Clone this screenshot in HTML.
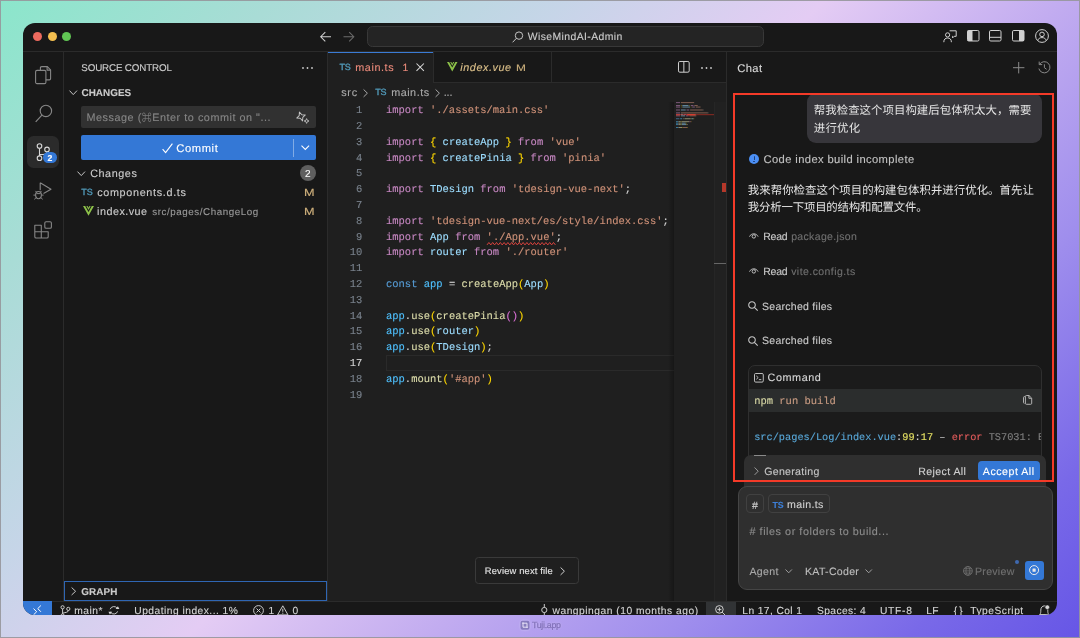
<!DOCTYPE html>
<html lang="zh"><head><meta charset="utf-8"><title>WiseMindAI-Admin</title><style>
html,body{margin:0;padding:0}
body{width:1080px;height:638px;overflow:hidden;position:relative;text-rendering:geometricPrecision;font-family:"Liberation Sans","Noto Sans CJK SC",sans-serif;
background:linear-gradient(135deg,#8be6cb 0%,#a9dcd6 16%,#c6d5e8 33%,#e4ccf4 48%,#c2acf0 62%,#9f8eed 76%,#7969e8 90%,#6656e6 100%);}
.frame{position:absolute;left:0;top:0;width:1078px;height:636px;border:1px solid rgba(150,150,155,.9);pointer-events:none}
.win{position:absolute;left:23px;top:23px;width:1034px;height:592.3px;border-radius:12px;background:#181818;overflow:hidden;will-change:transform}
.a{position:absolute;box-sizing:border-box}
.t{position:absolute;white-space:pre;line-height:20px;height:20px;-webkit-text-stroke:.12px currentColor}
svg{overflow:visible}
.wm{position:absolute;left:519.8px;top:619.7px;font-size:8.9px;line-height:11px;will-change:transform;color:rgba(124,108,182,.9);white-space:nowrap;letter-spacing:-.3px;-webkit-text-stroke:.3px rgba(124,108,182,.9);text-shadow:0 0 1.6px rgba(240,232,255,.75)}
</style></head><body><div class="win">
<div class="a" style="left:0.00px;top:28.00px;width:1034.00px;height:1.00px;background:#2b2b2b"></div>
<div class="a" style="left:40.00px;top:29.00px;width:1.00px;height:549.00px;background:#2b2b2b"></div>
<div class="a" style="left:304.00px;top:29.00px;width:1.00px;height:549.00px;background:#2b2b2b"></div>
<div class="a" style="left:305.00px;top:29.00px;width:399.00px;height:549.00px;background:#1f1f1f"></div>
<div class="a" style="left:703.00px;top:29.00px;width:1.00px;height:549.00px;background:#2b2b2b"></div>
<div class="a" style="left:0.00px;top:577.80px;width:1034.00px;height:1.00px;background:#2b2b2b"></div>
<div class="a" style="left:9.80px;top:9.00px;width:9.20px;height:9.20px;border-radius:50%;background:#ec6a5e"></div>
<div class="a" style="left:24.65px;top:9.00px;width:9.20px;height:9.20px;border-radius:50%;background:#f4bf4f"></div>
<div class="a" style="left:38.90px;top:9.00px;width:9.20px;height:9.20px;border-radius:50%;background:#61c554"></div>
<svg class="a" style="left:297.00px;top:8.00px;" width="11.50" height="11.50" viewBox="0 0 11.5 11.5"><path d="M11 5.75H0.8M5.3 1.1L0.7 5.75L5.3 10.4" fill="none" stroke="#cfcfcf" stroke-width="1.05"/></svg>
<svg class="a" style="left:320.00px;top:8.00px;" width="11.50" height="11.50" viewBox="0 0 11.5 11.5"><path d="M0.5 5.75H10.7M6.2 1.1L10.8 5.75L6.2 10.4" fill="none" stroke="#6b6b6b" stroke-width="1.05"/></svg>
<div class="a" style="left:344.00px;top:3.00px;width:397.00px;height:20.50px;background:#242424;border:1px solid #383838;border-radius:5.5px"></div>
<svg class="a" style="left:489.00px;top:7.50px;" width="11.50" height="12.00" viewBox="0 0 11.5 12"><circle cx="7" cy="4.6" r="3.7" fill="none" stroke="#c4c4c4" stroke-width="1"/><path d="M4.4 7.3L0.6 11.3" stroke="#c4c4c4" stroke-width="1" fill="none"/></svg>
<span class="t" style="left:504.80px;top:5px;font-size:10.40px;color:#cccccc;letter-spacing:0.404px;">WiseMindAI-Admin</span>
<svg class="a" style="left:919.50px;top:6.60px;" width="14.00" height="13.00" viewBox="0 0 14 13"><circle cx="4.6" cy="4.9" r="2.1" fill="none" stroke="#d0d0d0" stroke-width="1"/><path d="M0.8 12.2C0.8 9.3 2.4 8 4.6 8S8.4 9.3 8.4 12.2" fill="none" stroke="#d0d0d0" stroke-width="1"/><path d="M6.6 0.8H13.2V6.3H11.2L9.6 7.9V6.3H9.2" fill="none" stroke="#d0d0d0" stroke-width="1" stroke-linejoin="round"/></svg>
<svg class="a" style="left:943.50px;top:7.00px;" width="12.50" height="11.50" viewBox="0 0 12.5 11.5"><rect x="0.5" y="0.5" width="11.5" height="10.5" rx="1.3" fill="none" stroke="#d0d0d0" stroke-width="1"/><rect x="0.5" y="0.5" width="5" height="10.5" fill="#d0d0d0"/></svg>
<svg class="a" style="left:966.00px;top:7.00px;" width="12.50" height="11.50" viewBox="0 0 12.5 11.5"><rect x="0.5" y="0.5" width="11.5" height="10.5" rx="1.3" fill="none" stroke="#d0d0d0" stroke-width="1"/><path d="M0.5 7.3H12" stroke="#d0d0d0" stroke-width="1"/></svg>
<svg class="a" style="left:988.50px;top:7.00px;" width="12.50" height="11.50" viewBox="0 0 12.5 11.5"><rect x="0.5" y="0.5" width="11.5" height="10.5" rx="1.3" fill="none" stroke="#d0d0d0" stroke-width="1"/><rect x="7" y="0.5" width="5" height="10.5" fill="#d0d0d0"/></svg>
<svg class="a" style="left:1012.00px;top:5.90px;" width="14.00" height="14.00" viewBox="0 0 14 14"><circle cx="7" cy="7" r="6.4" fill="none" stroke="#d0d0d0" stroke-width="1"/><circle cx="7" cy="5.4" r="2.3" fill="none" stroke="#d0d0d0" stroke-width="1"/><path d="M2.8 11.6C3.3 9.4 4.9 8.6 7 8.6S10.7 9.4 11.2 11.6" fill="none" stroke="#d0d0d0" stroke-width="1"/></svg>
<svg class="a" style="left:11.50px;top:42.50px;" width="16.50" height="18.50" viewBox="0 0 16.5 18.5"><path d="M5.4 4.4V1.9Q5.4 0.6 6.7 0.6H12.3L15.6 3.9V12.6Q15.6 13.9 14.3 13.9H10.9" fill="none" stroke="#868686" stroke-width="1.1"/><path d="M12.1 0.8V4.1H15.4" fill="none" stroke="#868686" stroke-width="1.1"/><rect x="0.6" y="4.4" width="10.3" height="13.2" rx="1.4" fill="none" stroke="#868686" stroke-width="1.1"/></svg>
<svg class="a" style="left:11.50px;top:81.00px;" width="18.00" height="18.50" viewBox="0 0 18 18.5"><circle cx="10.9" cy="6.9" r="5.7" fill="none" stroke="#868686" stroke-width="1.15"/><path d="M6.9 11.2L0.7 17.9" stroke="#868686" stroke-width="1.15" fill="none"/></svg>
<div class="a" style="left:4.20px;top:113.00px;width:31.60px;height:31.70px;background:#2b2b2b;border-radius:6.5px"></div>
<svg class="a" style="left:12.00px;top:119.00px;" width="18.00" height="20.00" viewBox="0 0 18 20"><circle cx="4.5" cy="4" r="2.3" fill="none" stroke="#d7d7d7" stroke-width="1.1"/><circle cx="4.5" cy="16.2" r="2.3" fill="none" stroke="#d7d7d7" stroke-width="1.1"/><circle cx="12" cy="7.4" r="2.3" fill="none" stroke="#d7d7d7" stroke-width="1.1"/><path d="M4.5 6.3V13.9M12 9.7C12 12.4 9.5 12.6 4.6 12.6" fill="none" stroke="#d7d7d7" stroke-width="1.1"/></svg>
<div class="a" style="left:20.40px;top:129.40px;width:13.90px;height:10.40px;background:#3478d6;border-radius:5.2px"></div>
<span class="t" style="left:24.60px;top:125px;font-size:8.70px;color:#ffffff;font-weight:bold;">2</span>
<svg class="a" style="left:10.00px;top:159.00px;" width="19.00" height="18.00" viewBox="0 0 19 18"><path d="M7.2 0.8L18 7.3L10.5 11.6M7.2 0.8V8.2" fill="none" stroke="#868686" stroke-width="1.1" stroke-linejoin="round"/><ellipse cx="5.5" cy="13.1" rx="2.9" ry="3.6" fill="none" stroke="#868686" stroke-width="1.1"/><path d="M3.6 10.2L2.4 8.9M7.4 10.2L8.6 8.9M2.6 13.1H0.4M8.4 13.1H10.6M3.2 15.6L1.3 17.3M7.8 15.6L9.7 17.3M3.4 11.6H7.6" fill="none" stroke="#868686" stroke-width="1"/></svg>
<svg class="a" style="left:11.00px;top:197.50px;" width="18.00" height="17.50" viewBox="0 0 18 17.5"><path d="M0.8 4.2H7.3V10.7H14.2V15.7Q14.2 17 12.9 17H2.1Q0.8 17 0.8 15.7ZM7.3 10.7V17M0.8 10.7H7.3" fill="none" stroke="#868686" stroke-width="1.1" stroke-linejoin="round"/><rect x="10.8" y="0.7" width="6.6" height="6.6" rx="1.3" fill="none" stroke="#868686" stroke-width="1.1"/></svg>
<span class="t" style="left:58.30px;top:36px;font-size:9.80px;color:#cccccc;letter-spacing:-0.153px;">SOURCE CONTROL</span>
<svg class="a" style="left:278.50px;top:43.50px;" width="11.00" height="2.00" viewBox="0 0 11 2"><circle cx="1" cy="1" r="0.9" fill="#ccc"/><circle cx="5.5" cy="1" r="0.9" fill="#ccc"/><circle cx="10" cy="1" r="0.9" fill="#ccc"/></svg>
<svg class="a" style="left:45.50px;top:66.50px;" width="8.50" height="5.50" viewBox="0 0 8.5 5.5"><path d="M0.5 0.6L4.25 4.6L8 0.6" fill="none" stroke="#c5c5c5" stroke-width="1"/></svg>
<span class="t" style="left:58.50px;top:61px;font-size:9.90px;color:#cccccc;font-weight:bold;letter-spacing:0.044px;">CHANGES</span>
<div class="a" style="left:58.00px;top:83.00px;width:235.00px;height:22.00px;background:#313131;border-radius:2px"></div>
<span class="t" style="left:63.50px;top:85px;font-size:10.80px;color:#858585;letter-spacing:0.540px;">Message (<span style="font-size:.92em;vertical-align:.02em">⌘</span>Enter to commit on "...</span>
<svg class="a" style="left:273.00px;top:87.50px;" width="13.50" height="13.00" viewBox="0 0 13.5 13"><path d="M5 0.8L6.4 4.1L9.6 5.5L6.4 6.9L5 10.2L3.6 6.9L0.4 5.5L3.6 4.1Z" fill="none" stroke="#c5c5c5" stroke-width="0.95" stroke-linejoin="round" transform="rotate(-20 5 5.5)"/><path d="M10.6 7.6L11.3 9.3L13 10L11.3 10.7L10.6 12.4L9.9 10.7L8.2 10L9.9 9.3Z" fill="none" stroke="#c5c5c5" stroke-width="0.85" stroke-linejoin="round"/></svg>
<div class="a" style="left:58.00px;top:112.30px;width:235.00px;height:24.70px;background:#3478d6;border-radius:2px"></div>
<svg class="a" style="left:138.50px;top:119.50px;" width="11.00" height="10.50" viewBox="0 0 11 10.5"><path d="M0.6 6.2L3.6 9.6L10.4 0.7" fill="none" stroke="#fff" stroke-width="1.1"/></svg>
<span class="t" style="left:153.20px;top:116px;font-size:11.20px;color:#ffffff;letter-spacing:0.609px;">Commit</span>
<div class="a" style="left:269.90px;top:116.00px;width:1.00px;height:17.50px;background:rgba(255,255,255,.38)"></div>
<svg class="a" style="left:277.50px;top:122.30px;" width="8.60" height="5.20" viewBox="0 0 8.6 5.2"><path d="M0.5 0.6L4.3 4.4L8.1 0.6" fill="none" stroke="#fff" stroke-width="1.05"/></svg>
<svg class="a" style="left:54.30px;top:147.50px;" width="8.50" height="5.50" viewBox="0 0 8.5 5.5"><path d="M0.5 0.6L4.25 4.6L8 0.6" fill="none" stroke="#c5c5c5" stroke-width="1"/></svg>
<span class="t" style="left:67.20px;top:141px;font-size:10.80px;color:#cccccc;letter-spacing:0.567px;">Changes</span>
<div class="a" style="left:276.80px;top:142.20px;width:16.20px;height:16.00px;background:#5f5f5f;border-radius:8px"></div>
<span class="t" style="left:282.10px;top:142px;font-size:10.00px;color:#ffffff;">2</span>
<span class="t" style="left:58.30px;top:159px;font-size:9.00px;color:#519aba;letter-spacing:-0.158px;-webkit-text-stroke:.35px #519aba;">TS</span>
<span class="t" style="left:74.20px;top:160px;font-size:10.80px;color:#cccccc;letter-spacing:0.678px;">components.d.ts</span>
<span class="t" style="left:281.10px;top:161px;font-size:10.30px;color:#cfb07c;transform:scaleX(1.23);transform-origin:0 50%;">M</span>
<svg class="a" style="left:59.70px;top:183.00px;" width="11.00" height="10.00" viewBox="0 0 10.5 9.5"><path d="M0 0H2.1L5.25 5.6L8.4 0H10.5L5.25 9.4Z" fill="#8dc149"/><path d="M3.2 0H4.3L5.25 1.7L6.2 0H7.3L5.25 3.7Z" fill="#8dc149"/></svg>
<span class="t" style="left:74.10px;top:179px;font-size:10.80px;color:#cccccc;letter-spacing:0.474px;">index.vue</span>
<span class="t" style="left:129.30px;top:180px;font-size:9.80px;color:#9a9a9a;letter-spacing:0.555px;">src/pages/ChangeLog</span>
<span class="t" style="left:281.10px;top:180px;font-size:10.30px;color:#cfb07c;transform:scaleX(1.23);transform-origin:0 50%;">M</span>
<div class="a" style="left:41.00px;top:557.60px;width:263.00px;height:20.40px;border:1px solid #2f66b3"></div>
<svg class="a" style="left:47.90px;top:563.90px;" width="5.50" height="8.50" viewBox="0 0 5.5 8.5"><path d="M0.6 0.5L4.6 4.25L0.6 8" fill="none" stroke="#c5c5c5" stroke-width="1"/></svg>
<span class="t" style="left:58.30px;top:560px;font-size:9.90px;color:#cccccc;font-weight:bold;letter-spacing:0.126px;">GRAPH</span>
<div class="a" style="left:305.00px;top:29.00px;width:399.00px;height:30.00px;background:#181818"></div>
<div class="a" style="left:305.00px;top:59.00px;width:399.00px;height:1.00px;background:#2b2b2b"></div>
<div class="a" style="left:305.00px;top:29.00px;width:104.50px;height:31.00px;background:#1f1f1f"></div>
<div class="a" style="left:305.00px;top:28.50px;width:104.50px;height:1.10px;background:#3a7bd5"></div>
<div class="a" style="left:409.50px;top:29.00px;width:1.00px;height:30.00px;background:#2b2b2b"></div>
<div class="a" style="left:527.50px;top:29.00px;width:1.00px;height:30.00px;background:#2b2b2b"></div>
<span class="t" style="left:316.50px;top:34px;font-size:9.00px;color:#519aba;letter-spacing:-0.208px;-webkit-text-stroke:.35px #519aba;">TS</span>
<span class="t" style="left:332.30px;top:35px;font-size:10.80px;color:#e8897a;letter-spacing:0.584px;">main.ts</span>
<span class="t" style="left:379.60px;top:36px;font-size:10.40px;color:#e8897a;">1</span>
<svg class="a" style="left:392.80px;top:40.30px;" width="8.40" height="8.40" viewBox="0 0 8.4 8.4"><path d="M0.5 0.5L7.9 7.9M7.9 0.5L0.5 7.9" stroke="#d8d8d8" stroke-width="1.05" fill="none"/></svg>
<svg class="a" style="left:423.50px;top:39.30px;" width="10.50" height="9.50" viewBox="0 0 10.5 9.5"><path d="M0 0H2.1L5.25 5.6L8.4 0H10.5L5.25 9.4Z" fill="#8dc149"/><path d="M3.2 0H4.3L5.25 1.7L6.2 0H7.3L5.25 3.7Z" fill="#8dc149"/></svg>
<span class="t" style="left:437.30px;top:35px;font-size:10.80px;color:#dcc08a;font-style:italic;letter-spacing:0.563px;">index.vue</span>
<span class="t" style="left:493.40px;top:36px;font-size:9.50px;color:#c9ae7b;transform:scaleX(1.25);transform-origin:0 50%;">M</span>
<svg class="a" style="left:655.00px;top:38.30px;" width="11.70" height="11.70" viewBox="0 0 11.7 11.7"><rect x="0.5" y="0.5" width="10.7" height="10.7" rx="1.3" fill="none" stroke="#d0d0d0" stroke-width="1"/><path d="M5.85 0.5V11.2" stroke="#d0d0d0" stroke-width="1"/></svg>
<svg class="a" style="left:677.50px;top:43.50px;" width="11.00" height="2.00" viewBox="0 0 11 2"><circle cx="1" cy="1" r="0.9" fill="#ccc"/><circle cx="5.5" cy="1" r="0.9" fill="#ccc"/><circle cx="10" cy="1" r="0.9" fill="#ccc"/></svg>
<span class="t" style="left:318.20px;top:60px;font-size:10.80px;color:#a9a9a9;letter-spacing:0.765px;">src</span>
<svg class="a" style="left:340.30px;top:65.50px;" width="5.00" height="8.40" viewBox="0 0 5 8.4"><path d="M0.6 0.5L4.4 4.2L0.6 7.9" fill="none" stroke="#a9a9a9" stroke-width="1"/></svg>
<span class="t" style="left:352.30px;top:59px;font-size:9.00px;color:#519aba;letter-spacing:-0.208px;-webkit-text-stroke:.35px #519aba;">TS</span>
<span class="t" style="left:368.20px;top:60px;font-size:10.80px;color:#a9a9a9;letter-spacing:0.512px;">main.ts</span>
<svg class="a" style="left:411.50px;top:65.50px;" width="5.00" height="8.40" viewBox="0 0 5 8.4"><path d="M0.6 0.5L4.4 4.2L0.6 7.9" fill="none" stroke="#a9a9a9" stroke-width="1"/></svg>
<span class="t" style="left:420.70px;top:60px;font-size:10.80px;color:#a9a9a9;letter-spacing:-0.100px;">...</span>
<div class="a" style="left:363.00px;top:331.60px;width:288.00px;height:16.00px;border:1px solid #2a2a2a;border-right:none"></div>
<span class="t" style="left:332.92px;top:78px;font-size:10.47px;color:#78808b;font-family:'Liberation Mono','DejaVu Sans Mono',monospace;">1</span>
<span class="t" style="left:363.00px;top:78px;font-size:10.47px;color:#d4d4d4;font-family:'Liberation Mono','DejaVu Sans Mono',monospace;"><span style="color:#c586c0">import</span> <span style="color:#ce9178">'./assets/main.css'</span></span>
<span class="t" style="left:332.92px;top:94px;font-size:10.47px;color:#78808b;font-family:'Liberation Mono','DejaVu Sans Mono',monospace;">2</span>
<span class="t" style="left:332.92px;top:110px;font-size:10.47px;color:#78808b;font-family:'Liberation Mono','DejaVu Sans Mono',monospace;">3</span>
<span class="t" style="left:363.00px;top:110px;font-size:10.47px;color:#d4d4d4;font-family:'Liberation Mono','DejaVu Sans Mono',monospace;"><span style="color:#c586c0">import</span> <span style="color:#ffd700">{</span> <span style="color:#9cdcfe">createApp</span> <span style="color:#ffd700">}</span> <span style="color:#c586c0">from</span> <span style="color:#ce9178">'vue'</span></span>
<span class="t" style="left:332.92px;top:126px;font-size:10.47px;color:#78808b;font-family:'Liberation Mono','DejaVu Sans Mono',monospace;">4</span>
<span class="t" style="left:363.00px;top:126px;font-size:10.47px;color:#d4d4d4;font-family:'Liberation Mono','DejaVu Sans Mono',monospace;"><span style="color:#c586c0">import</span> <span style="color:#ffd700">{</span> <span style="color:#9cdcfe">createPinia</span> <span style="color:#ffd700">}</span> <span style="color:#c586c0">from</span> <span style="color:#ce9178">'pinia'</span></span>
<span class="t" style="left:332.92px;top:141px;font-size:10.47px;color:#78808b;font-family:'Liberation Mono','DejaVu Sans Mono',monospace;">5</span>
<span class="t" style="left:332.92px;top:157px;font-size:10.47px;color:#78808b;font-family:'Liberation Mono','DejaVu Sans Mono',monospace;">6</span>
<span class="t" style="left:363.00px;top:157px;font-size:10.47px;color:#d4d4d4;font-family:'Liberation Mono','DejaVu Sans Mono',monospace;"><span style="color:#c586c0">import</span> <span style="color:#9cdcfe">TDesign</span> <span style="color:#c586c0">from</span> <span style="color:#ce9178">'tdesign-vue-next'</span><span style="color:#d4d4d4">;</span></span>
<span class="t" style="left:332.92px;top:173px;font-size:10.47px;color:#78808b;font-family:'Liberation Mono','DejaVu Sans Mono',monospace;">7</span>
<span class="t" style="left:332.92px;top:189px;font-size:10.47px;color:#78808b;font-family:'Liberation Mono','DejaVu Sans Mono',monospace;">8</span>
<span class="t" style="left:363.00px;top:189px;font-size:10.47px;color:#d4d4d4;font-family:'Liberation Mono','DejaVu Sans Mono',monospace;"><span style="color:#c586c0">import</span> <span style="color:#ce9178">'tdesign-vue-next/es/style/index.css'</span><span style="color:#d4d4d4">;</span></span>
<span class="t" style="left:332.92px;top:205px;font-size:10.47px;color:#78808b;font-family:'Liberation Mono','DejaVu Sans Mono',monospace;">9</span>
<span class="t" style="left:363.00px;top:205px;font-size:10.47px;color:#d4d4d4;font-family:'Liberation Mono','DejaVu Sans Mono',monospace;"><span style="color:#c586c0">import</span> <span style="color:#9cdcfe">App</span> <span style="color:#c586c0">from</span> <span style="color:#ce9178">'./App.vue'</span><span style="color:#d4d4d4">;</span></span>
<span class="t" style="left:326.64px;top:220px;font-size:10.47px;color:#78808b;font-family:'Liberation Mono','DejaVu Sans Mono',monospace;">10</span>
<span class="t" style="left:363.00px;top:220px;font-size:10.47px;color:#d4d4d4;font-family:'Liberation Mono','DejaVu Sans Mono',monospace;"><span style="color:#c586c0">import</span> <span style="color:#9cdcfe">router</span> <span style="color:#c586c0">from</span> <span style="color:#ce9178">'./router'</span></span>
<span class="t" style="left:326.64px;top:236px;font-size:10.47px;color:#78808b;font-family:'Liberation Mono','DejaVu Sans Mono',monospace;">11</span>
<span class="t" style="left:326.64px;top:252px;font-size:10.47px;color:#78808b;font-family:'Liberation Mono','DejaVu Sans Mono',monospace;">12</span>
<span class="t" style="left:363.00px;top:252px;font-size:10.47px;color:#d4d4d4;font-family:'Liberation Mono','DejaVu Sans Mono',monospace;"><span style="color:#569cd6">const</span> <span style="color:#4fc1ff">app</span> <span style="color:#d4d4d4">=</span> <span style="color:#dcdcaa">createApp</span><span style="color:#ffd700">(</span><span style="color:#9cdcfe">App</span><span style="color:#ffd700">)</span></span>
<span class="t" style="left:326.64px;top:268px;font-size:10.47px;color:#78808b;font-family:'Liberation Mono','DejaVu Sans Mono',monospace;">13</span>
<span class="t" style="left:326.64px;top:284px;font-size:10.47px;color:#78808b;font-family:'Liberation Mono','DejaVu Sans Mono',monospace;">14</span>
<span class="t" style="left:363.00px;top:284px;font-size:10.47px;color:#d4d4d4;font-family:'Liberation Mono','DejaVu Sans Mono',monospace;"><span style="color:#4fc1ff">app</span><span style="color:#d4d4d4">.</span><span style="color:#dcdcaa">use</span><span style="color:#ffd700">(</span><span style="color:#dcdcaa">createPinia</span><span style="color:#da70d6">()</span><span style="color:#ffd700">)</span></span>
<span class="t" style="left:326.64px;top:299px;font-size:10.47px;color:#78808b;font-family:'Liberation Mono','DejaVu Sans Mono',monospace;">15</span>
<span class="t" style="left:363.00px;top:299px;font-size:10.47px;color:#d4d4d4;font-family:'Liberation Mono','DejaVu Sans Mono',monospace;"><span style="color:#4fc1ff">app</span><span style="color:#d4d4d4">.</span><span style="color:#dcdcaa">use</span><span style="color:#ffd700">(</span><span style="color:#9cdcfe">router</span><span style="color:#ffd700">)</span></span>
<span class="t" style="left:326.64px;top:315px;font-size:10.47px;color:#78808b;font-family:'Liberation Mono','DejaVu Sans Mono',monospace;">16</span>
<span class="t" style="left:363.00px;top:315px;font-size:10.47px;color:#d4d4d4;font-family:'Liberation Mono','DejaVu Sans Mono',monospace;"><span style="color:#4fc1ff">app</span><span style="color:#d4d4d4">.</span><span style="color:#dcdcaa">use</span><span style="color:#ffd700">(</span><span style="color:#9cdcfe">TDesign</span><span style="color:#ffd700">)</span><span style="color:#d4d4d4">;</span></span>
<span class="t" style="left:326.64px;top:331px;font-size:10.47px;color:#d0d0d0;font-family:'Liberation Mono','DejaVu Sans Mono',monospace;">17</span>
<span class="t" style="left:326.64px;top:347px;font-size:10.47px;color:#78808b;font-family:'Liberation Mono','DejaVu Sans Mono',monospace;">18</span>
<span class="t" style="left:363.00px;top:347px;font-size:10.47px;color:#d4d4d4;font-family:'Liberation Mono','DejaVu Sans Mono',monospace;"><span style="color:#4fc1ff">app</span><span style="color:#d4d4d4">.</span><span style="color:#dcdcaa">mount</span><span style="color:#ffd700">(</span><span style="color:#ce9178">'#app'</span><span style="color:#ffd700">)</span></span>
<span class="t" style="left:326.64px;top:363px;font-size:10.47px;color:#78808b;font-family:'Liberation Mono','DejaVu Sans Mono',monospace;">19</span>
<svg class="a" style="left:463.60px;top:218.80px;" width="69.60" height="3.50" viewBox="0 0 69.60 3.5"><path d="M0.00 2.90L1.90 0.50L3.80 2.90L5.70 0.50L7.60 2.90L9.50 0.50L11.40 2.90L13.30 0.50L15.20 2.90L17.10 0.50L19.00 2.90L20.90 0.50L22.80 2.90L24.70 0.50L26.60 2.90L28.50 0.50L30.40 2.90L32.30 0.50L34.20 2.90L36.10 0.50L38.00 2.90L39.90 0.50L41.80 2.90L43.70 0.50L45.60 2.90L47.50 0.50L49.40 2.90L51.30 0.50L53.20 2.90L55.10 0.50L57.00 2.90L58.90 0.50L60.80 2.90L62.70 0.50L64.60 2.90L66.50 0.50L68.40 2.90" fill="none" stroke="#e5453f" stroke-width="0.95"/></svg>
<div class="a" style="left:645.00px;top:79.00px;width:6.00px;height:499.00px;background:linear-gradient(90deg,rgba(0,0,0,0),rgba(0,0,0,.28))"></div>
<div class="a" style="left:691.00px;top:79.00px;width:13.00px;height:499.00px;background:#212121;border-left:1px solid #262626"></div>
<div class="a" style="left:699.30px;top:159.50px;width:3.70px;height:9.50px;background:#b5382a"></div>
<div class="a" style="left:691.00px;top:239.50px;width:12.00px;height:1.70px;background:#666"></div>
<div class="a" style="left:451.60px;top:534.00px;width:104.80px;height:27.30px;background:#1f1f1f;border:1px solid #3a3a3a;border-radius:3.5px"></div>
<span class="t" style="left:461.80px;top:538px;font-size:9.40px;color:#e4e4e4;letter-spacing:0.153px;">Review next file</span>
<svg class="a" style="left:536.50px;top:543.50px;" width="5.00" height="8.40" viewBox="0 0 5 8.4"><path d="M0.6 0.5L4.4 4.2L0.6 7.9" fill="none" stroke="#d0d0d0" stroke-width="1"/></svg>
<svg class="a" style="left:653.20px;top:79.00px;" width="40.00" height="30.00" viewBox="0 0 40 30"><g opacity=".62"><rect x="0.00" y="0.20" width="4.08" height="0.9" fill="#c586c0"/><rect x="4.93" y="0.20" width="13.24" height="0.9" fill="#ce9178"/><rect x="0.00" y="3.13" width="4.08" height="0.9" fill="#c586c0"/><rect x="4.93" y="3.13" width="0.55" height="0.9" fill="#ffd700"/><rect x="6.34" y="3.13" width="6.19" height="0.9" fill="#9cdcfe"/><rect x="13.39" y="3.13" width="0.55" height="0.9" fill="#ffd700"/><rect x="14.80" y="3.13" width="2.67" height="0.9" fill="#c586c0"/><rect x="18.33" y="3.13" width="3.38" height="0.9" fill="#ce9178"/><rect x="0.00" y="4.59" width="4.08" height="0.9" fill="#c586c0"/><rect x="4.93" y="4.59" width="0.55" height="0.9" fill="#ffd700"/><rect x="6.34" y="4.59" width="7.60" height="0.9" fill="#9cdcfe"/><rect x="14.80" y="4.59" width="0.55" height="0.9" fill="#ffd700"/><rect x="16.21" y="4.59" width="2.67" height="0.9" fill="#c586c0"/><rect x="19.74" y="4.59" width="4.78" height="0.9" fill="#ce9178"/><rect x="0.00" y="7.53" width="4.08" height="0.9" fill="#c586c0"/><rect x="4.93" y="7.53" width="4.78" height="0.9" fill="#9cdcfe"/><rect x="10.57" y="7.53" width="2.67" height="0.9" fill="#c586c0"/><rect x="14.10" y="7.53" width="12.54" height="0.9" fill="#ce9178"/><rect x="26.79" y="7.53" width="0.55" height="0.9" fill="#d4d4d4"/><rect x="0.00" y="10.45" width="4.08" height="0.9" fill="#c586c0"/><rect x="4.93" y="10.45" width="26.64" height="0.9" fill="#ce9178"/><rect x="31.72" y="10.45" width="0.55" height="0.9" fill="#d4d4d4"/><rect x="0.00" y="11.92" width="4.08" height="0.9" fill="#c586c0"/><rect x="4.93" y="11.92" width="1.96" height="0.9" fill="#9cdcfe"/><rect x="7.75" y="11.92" width="2.67" height="0.9" fill="#c586c0"/><rect x="11.28" y="11.92" width="7.60" height="0.9" fill="#ce9178"/><rect x="19.04" y="11.92" width="0.55" height="0.9" fill="#d4d4d4"/><rect x="0.00" y="13.39" width="4.08" height="0.9" fill="#c586c0"/><rect x="4.93" y="13.39" width="4.08" height="0.9" fill="#9cdcfe"/><rect x="9.87" y="13.39" width="2.67" height="0.9" fill="#c586c0"/><rect x="13.39" y="13.39" width="6.90" height="0.9" fill="#ce9178"/><rect x="0.00" y="16.31" width="3.38" height="0.9" fill="#569cd6"/><rect x="4.23" y="16.31" width="1.96" height="0.9" fill="#4fc1ff"/><rect x="7.05" y="16.31" width="0.55" height="0.9" fill="#d4d4d4"/><rect x="8.46" y="16.31" width="6.19" height="0.9" fill="#dcdcaa"/><rect x="14.80" y="16.31" width="0.55" height="0.9" fill="#ffd700"/><rect x="15.51" y="16.31" width="1.96" height="0.9" fill="#9cdcfe"/><rect x="17.62" y="16.31" width="0.55" height="0.9" fill="#ffd700"/><rect x="0.00" y="19.25" width="1.96" height="0.9" fill="#4fc1ff"/><rect x="2.11" y="19.25" width="0.55" height="0.9" fill="#d4d4d4"/><rect x="2.82" y="19.25" width="1.96" height="0.9" fill="#dcdcaa"/><rect x="4.93" y="19.25" width="0.55" height="0.9" fill="#ffd700"/><rect x="5.64" y="19.25" width="7.60" height="0.9" fill="#dcdcaa"/><rect x="13.39" y="19.25" width="1.26" height="0.9" fill="#da70d6"/><rect x="14.80" y="19.25" width="0.55" height="0.9" fill="#ffd700"/><rect x="0.00" y="20.71" width="1.96" height="0.9" fill="#4fc1ff"/><rect x="2.11" y="20.71" width="0.55" height="0.9" fill="#d4d4d4"/><rect x="2.82" y="20.71" width="1.96" height="0.9" fill="#dcdcaa"/><rect x="4.93" y="20.71" width="0.55" height="0.9" fill="#ffd700"/><rect x="5.64" y="20.71" width="4.08" height="0.9" fill="#9cdcfe"/><rect x="9.87" y="20.71" width="0.55" height="0.9" fill="#ffd700"/><rect x="0.00" y="22.18" width="1.96" height="0.9" fill="#4fc1ff"/><rect x="2.11" y="22.18" width="0.55" height="0.9" fill="#d4d4d4"/><rect x="2.82" y="22.18" width="1.96" height="0.9" fill="#dcdcaa"/><rect x="4.93" y="22.18" width="0.55" height="0.9" fill="#ffd700"/><rect x="5.64" y="22.18" width="4.78" height="0.9" fill="#9cdcfe"/><rect x="10.57" y="22.18" width="0.55" height="0.9" fill="#ffd700"/><rect x="11.28" y="22.18" width="0.55" height="0.9" fill="#d4d4d4"/><rect x="0.00" y="25.11" width="1.96" height="0.9" fill="#4fc1ff"/><rect x="2.11" y="25.11" width="0.55" height="0.9" fill="#d4d4d4"/><rect x="2.82" y="25.11" width="3.38" height="0.9" fill="#dcdcaa"/><rect x="6.34" y="25.11" width="0.55" height="0.9" fill="#ffd700"/><rect x="7.05" y="25.11" width="4.08" height="0.9" fill="#ce9178"/><rect x="11.28" y="25.11" width="0.55" height="0.9" fill="#ffd700"/></g><rect x="0" y="12.42" width="38" height="0.7" fill="#d63426" opacity=".85"/><rect x="0" y="12.12" width="3.6" height="1.3" fill="#c0392b" opacity=".7"/><rect x="11.2" y="12.12" width="8" height="1.3" fill="#e8392b" opacity=".8"/></svg>
<div class="a" style="left:703.00px;top:29.00px;width:1.00px;height:549.00px;background:#2b2b2b"></div>
<span class="t" style="left:714.30px;top:36px;font-size:11.20px;color:#d8d8d8;letter-spacing:0.365px;">Chat</span>
<svg class="a" style="left:990.20px;top:39.00px;" width="11.40" height="11.40" viewBox="0 0 11.4 11.4"><path d="M5.7 0V11.4M0 5.7H11.4" stroke="#8a8a8a" stroke-width="1" fill="none"/></svg>
<svg class="a" style="left:1014.60px;top:38.30px;" width="12.60" height="12.60" viewBox="0 0 12.6 12.6"><path d="M1.6 3.3A5.6 5.6 0 1 1 0.9 7.6" fill="none" stroke="#8a8a8a" stroke-width="1"/><path d="M1.2 0.6V3.6H4.2" fill="none" stroke="#8a8a8a" stroke-width="1"/><path d="M6.4 3.3V6.7L8.6 8.3" fill="none" stroke="#8a8a8a" stroke-width="1"/></svg>
<div class="a" style="left:783.70px;top:70.00px;width:235.30px;height:49.80px;background:#37363b;border-radius:9px"></div>
<span class="t" style="left:790.80px;top:78px;font-size:11.40px;color:#e6e6e6;letter-spacing:0.061px;-webkit-text-stroke:0;">帮我检查这个项目构建后包体积太大，需要</span>
<span class="t" style="left:790.80px;top:96px;font-size:11.40px;color:#e6e6e6;letter-spacing:0.255px;-webkit-text-stroke:0;">进行优化</span>
<div class="a" style="left:725.90px;top:130.60px;width:10.30px;height:10.30px;background:#4b8ff5;border-radius:50%"></div>
<div class="a" style="left:730.50px;top:132.60px;width:1.10px;height:4.20px;background:#1d3f78;border-radius:.5px"></div>
<div class="a" style="left:730.40px;top:137.70px;width:1.30px;height:1.30px;background:#1d3f78;border-radius:50%"></div>
<span class="t" style="left:740.50px;top:127px;font-size:11.20px;color:#c2c2c2;letter-spacing:0.387px;">Code index build incomplete</span>
<span class="t" style="left:724.80px;top:158px;font-size:11.40px;color:#e6e6e6;letter-spacing:0.053px;-webkit-text-stroke:0;">我来帮你检查这个项目的构建包体积并进行优化。首先让</span>
<span class="t" style="left:724.80px;top:175px;font-size:11.40px;color:#e6e6e6;letter-spacing:-0.167px;-webkit-text-stroke:0;">我分析一下项目的结构和配置文件。</span>
<svg class="a" style="left:726.00px;top:209.00px;" width="9.60" height="7.00" viewBox="0 0 9.6 7"><path d="M0.5 4.6C2.2 0.9 7.4 0.9 9.1 4.6" fill="none" stroke="#c0c0c0" stroke-width="1"/><circle cx="4.8" cy="4.4" r="1.7" fill="none" stroke="#c0c0c0" stroke-width="1"/></svg>
<span class="t" style="left:740.20px;top:204px;font-size:10.50px;color:#c8c8c8;letter-spacing:-0.227px;">Read</span>
<span class="t" style="left:768.20px;top:204px;font-size:10.50px;color:#6f6f6f;letter-spacing:0.334px;">package.json</span>
<svg class="a" style="left:726.00px;top:244.40px;" width="9.60" height="7.00" viewBox="0 0 9.6 7"><path d="M0.5 4.6C2.2 0.9 7.4 0.9 9.1 4.6" fill="none" stroke="#c0c0c0" stroke-width="1"/><circle cx="4.8" cy="4.4" r="1.7" fill="none" stroke="#c0c0c0" stroke-width="1"/></svg>
<span class="t" style="left:740.20px;top:239px;font-size:10.50px;color:#c8c8c8;letter-spacing:-0.227px;">Read</span>
<span class="t" style="left:768.20px;top:239px;font-size:10.50px;color:#6f6f6f;letter-spacing:0.437px;">vite.config.ts</span>
<svg class="a" style="left:725.00px;top:278.00px;" width="10.00" height="10.00" viewBox="0 0 10 10"><circle cx="4" cy="4" r="3.3" fill="none" stroke="#c8c8c8" stroke-width="1.05"/><path d="M6.4 6.4L9.7 9.7" stroke="#c8c8c8" stroke-width="1.05" fill="none"/></svg>
<span class="t" style="left:739.00px;top:274px;font-size:10.50px;color:#c8c8c8;letter-spacing:0.275px;">Searched files</span>
<svg class="a" style="left:725.00px;top:312.60px;" width="10.00" height="10.00" viewBox="0 0 10 10"><circle cx="4" cy="4" r="3.3" fill="none" stroke="#c8c8c8" stroke-width="1.05"/><path d="M6.4 6.4L9.7 9.7" stroke="#c8c8c8" stroke-width="1.05" fill="none"/></svg>
<span class="t" style="left:739.00px;top:308px;font-size:10.50px;color:#c8c8c8;letter-spacing:0.275px;">Searched files</span>
<div class="a" style="left:725.00px;top:342.30px;width:294.30px;height:104.70px;background:#1b1b1b;border:1px solid #2f2f2f;border-radius:7px"></div>
<svg class="a" style="left:731.00px;top:349.70px;" width="9.80" height="9.60" viewBox="0 0 9.8 9.6"><rect x="0.5" y="0.5" width="8.8" height="8.6" rx="1.2" fill="none" stroke="#c8c8c8" stroke-width="0.95"/><path d="M2.3 2.9L4.2 4.6L2.3 6.3M4.9 6.6H7.3" fill="none" stroke="#c8c8c8" stroke-width="0.9"/></svg>
<span class="t" style="left:744.50px;top:345px;font-size:10.80px;color:#d6d6d6;letter-spacing:0.584px;">Command</span>
<div class="a" style="left:726.00px;top:365.80px;width:292.30px;height:23.20px;background:#2b2d2d"></div>
<span class="t" style="left:731.20px;top:369px;font-size:10.47px;color:#c89b82;font-family:'Liberation Mono','DejaVu Sans Mono',monospace;"><span style="color:#d6d6a4">npm</span> run build</span>
<svg class="a" style="left:1000.00px;top:372.30px;" width="9.20" height="9.80" viewBox="0 0 9.2 9.8"><path d="M2.4 1.9V1.5Q2.4 0.5 3.4 0.5H6L8.7 3.2V8.3Q8.7 9.3 7.7 9.3H3.4Q2.4 9.3 2.4 8.3V1.9M5.9 0.6V3.3H8.6" fill="none" stroke="#b9b9b9" stroke-width="0.95"/><path d="M2.2 1.6H1.5Q0.5 1.6 0.5 2.6V7.4Q0.5 8.3 1.4 8.4" fill="none" stroke="#b9b9b9" stroke-width="0.95"/></svg>
<div class="a" style="left:726.00px;top:397.00px;width:292.30px;height:36.00px;overflow:hidden;left:0;top:0;width:1018.30px;height:433.00px"><span class="t" style="left:731.20px;top:405px;font-size:10.29px;color:#d0d0d0;font-family:'Liberation Mono','DejaVu Sans Mono',monospace;"><span style="color:#58a6d6">src/pages/Log/index.vue</span><span style="color:#d0d0d0">:</span><span style="color:#e5e163">99</span><span style="color:#d0d0d0">:</span><span style="color:#e5e163">17</span><span style="color:#d0d0d0"> – </span><span style="color:#e25c5c">error</span><span style="color:#7f7f7f"> TS7031: B</span></span></div>
<div class="a" style="left:721.20px;top:432.40px;width:301.80px;height:31.60px;background:#2f2f2f;border-radius:7px 7px 0 0"></div>
<div class="a" style="left:730.80px;top:431.60px;width:12.00px;height:1.20px;background:#8a8a8a"></div>
<svg class="a" style="left:731.00px;top:443.60px;" width="4.80" height="8.40" viewBox="0 0 4.8 8.4"><path d="M0.6 0.5L4.2 4.2L0.6 7.9" fill="none" stroke="#9a9a9a" stroke-width="1"/></svg>
<span class="t" style="left:741.20px;top:439px;font-size:10.60px;color:#c4c4c4;letter-spacing:0.298px;">Generating</span>
<span class="t" style="left:895.20px;top:439px;font-size:10.60px;color:#d0d0d0;letter-spacing:0.403px;">Reject All</span>
<div class="a" style="left:954.50px;top:438.30px;width:62.50px;height:20.20px;background:#3478d6;border-radius:4px"></div>
<span class="t" style="left:959.80px;top:439px;font-size:10.60px;color:#ffffff;letter-spacing:0.527px;">Accept All</span>
<div class="a" style="left:714.50px;top:463.20px;width:315.00px;height:103.40px;background:#2f2f2f;border:1px solid #454545;border-radius:9px"></div>
<div class="a" style="left:723.30px;top:471.20px;width:17.40px;height:19.20px;border:1px solid #414141;border-radius:4px"></div>
<span class="t" style="left:728.90px;top:473px;font-size:10.60px;color:#d0d0d0;">#</span>
<div class="a" style="left:744.50px;top:471.20px;width:62.10px;height:19.20px;border:1px solid #414141;border-radius:4px"></div>
<span class="t" style="left:749.50px;top:472px;font-size:8.80px;color:#3d7fd6;font-weight:bold;letter-spacing:-0.075px;">TS</span>
<span class="t" style="left:764.00px;top:472px;font-size:10.60px;color:#d0d0d0;letter-spacing:0.363px;">main.ts</span>
<span class="t" style="left:726.50px;top:499px;font-size:10.80px;color:#8c8c8c;letter-spacing:0.549px;"># files or folders to build...</span>
<span class="t" style="left:726.50px;top:539px;font-size:10.60px;color:#a8a8a8;letter-spacing:0.302px;">Agent</span>
<svg class="a" style="left:761.70px;top:545.60px;" width="7.40" height="4.60" viewBox="0 0 7.4 4.6"><path d="M0.5 0.5L3.7 3.8L6.9 0.5" fill="none" stroke="#a0a0a0" stroke-width="1"/></svg>
<span class="t" style="left:782.00px;top:539px;font-size:10.60px;color:#bdbdbd;letter-spacing:0.286px;">KAT-Coder</span>
<svg class="a" style="left:842.30px;top:545.60px;" width="7.40" height="4.60" viewBox="0 0 7.4 4.6"><path d="M0.5 0.5L3.7 3.8L6.9 0.5" fill="none" stroke="#a0a0a0" stroke-width="1"/></svg>
<svg class="a" style="left:939.80px;top:542.90px;" width="9.80" height="9.80" viewBox="0 0 9.8 9.8"><circle cx="4.9" cy="4.9" r="4.4" fill="none" stroke="#6e6e6e" stroke-width="0.9"/><ellipse cx="4.9" cy="4.9" rx="2" ry="4.4" fill="none" stroke="#6e6e6e" stroke-width="0.8"/><path d="M0.5 4.9H9.3M1.2 2.7H8.6M1.2 7.1H8.6" stroke="#6e6e6e" stroke-width="0.8" fill="none"/></svg>
<span class="t" style="left:952.00px;top:539px;font-size:10.60px;color:#707070;letter-spacing:0.273px;">Preview</span>
<div class="a" style="left:991.60px;top:536.60px;width:4.20px;height:4.20px;background:#3f69b0;border-radius:50%"></div>
<div class="a" style="left:1001.70px;top:537.80px;width:19.50px;height:19.20px;background:#3478d6;border-radius:3px"></div>
<svg class="a" style="left:1006.30px;top:542.30px;" width="10.20" height="10.20" viewBox="0 0 10.2 10.2"><circle cx="5.1" cy="5.1" r="4.5" fill="none" stroke="#e8e8e8" stroke-width="1"/><rect x="3.5" y="3.5" width="3.2" height="3.2" rx="0.5" fill="#e8e8e8"/></svg>
<div class="a" style="left:710.00px;top:70.00px;width:321.20px;height:389.20px;border:2.3px solid #f43a28"></div>
<div class="a" style="left:0.00px;top:578.00px;width:29.00px;height:15.00px;background:#3478d6"></div>
<svg class="a" style="left:10.00px;top:581.60px;" width="8.40" height="10.40" viewBox="0 0 8.4 10.4"><path d="M7.9 0.5L4.8 3.6L7.9 6.8M0.5 3.6L3.7 6.7L0.5 9.9" fill="none" stroke="#fff" stroke-width="1"/></svg>
<svg class="a" style="left:36.50px;top:581.60px;" width="10.50" height="11.00" viewBox="0 0 10.5 11"><circle cx="2.6" cy="2.3" r="1.6" fill="none" stroke="#d4d4d4" stroke-width="0.95"/><circle cx="8.3" cy="3.9" r="1.6" fill="none" stroke="#d4d4d4" stroke-width="0.95"/><circle cx="2.6" cy="10.5" r="1.6" fill="none" stroke="#d4d4d4" stroke-width="0.95"/><path d="M2.6 3.9V8.9M8.3 5.5C8.3 7.6 5.4 7.2 2.8 8.2" fill="none" stroke="#d4d4d4" stroke-width="0.95"/></svg>
<span class="t" style="left:51.20px;top:579px;font-size:10.25px;color:#d4d4d4;letter-spacing:0.496px;">main*</span>
<svg class="a" style="left:85.30px;top:582.00px;" width="11.80" height="10.60" viewBox="0 0 11.8 10.6"><path d="M2.2 4.2A3.9 3.9 0 0 1 9.2 3.4M9.6 6.4A3.9 3.9 0 0 1 2.6 7.2" fill="none" stroke="#d4d4d4" stroke-width="0.95"/><path d="M7.6 3.9L11.4 3.9L9.9 1.2ZM4.2 6.7L0.4 6.7L1.9 9.4Z" fill="#d4d4d4"/></svg>
<span class="t" style="left:111.30px;top:579px;font-size:10.25px;color:#d4d4d4;letter-spacing:0.475px;">Updating index... 1%</span>
<svg class="a" style="left:229.80px;top:582.00px;" width="11.00" height="11.00" viewBox="0 0 11 11"><circle cx="5.5" cy="5.5" r="4.9" fill="none" stroke="#d4d4d4" stroke-width="0.95"/><path d="M3.5 3.5L7.5 7.5M7.5 3.5L3.5 7.5" stroke="#d4d4d4" stroke-width="0.95" fill="none"/></svg>
<span class="t" style="left:245.40px;top:579px;font-size:10.25px;color:#d4d4d4;">1</span>
<svg class="a" style="left:254.00px;top:582.00px;" width="11.60" height="10.40" viewBox="0 0 11.6 10.4"><path d="M5.8 0.8L11 9.9H0.6Z" fill="none" stroke="#d4d4d4" stroke-width="0.95" stroke-linejoin="round"/><path d="M5.8 3.8V6.8M5.8 7.7V8.8" stroke="#d4d4d4" stroke-width="0.95" fill="none"/></svg>
<span class="t" style="left:269.50px;top:579px;font-size:10.25px;color:#d4d4d4;">0</span>
<svg class="a" style="left:516.80px;top:581.20px;" width="8.60" height="11.80" viewBox="0 0 8.6 11.8"><circle cx="4.3" cy="6" r="2.6" fill="none" stroke="#d4d4d4" stroke-width="0.95"/><path d="M4.3 0V3.4M4.3 8.6V11.8" stroke="#d4d4d4" stroke-width="0.95" fill="none"/></svg>
<span class="t" style="left:529.50px;top:579px;font-size:10.25px;color:#d4d4d4;letter-spacing:0.512px;">wangpingan (10 months ago)</span>
<div class="a" style="left:682.50px;top:578.80px;width:30.00px;height:14.20px;background:#313335"></div>
<svg class="a" style="left:692.00px;top:581.80px;" width="11.00" height="11.00" viewBox="0 0 11 11"><circle cx="4.4" cy="4.4" r="3.8" fill="none" stroke="#d4d4d4" stroke-width="0.95"/><path d="M7.1 7.1L10.6 10.6M2.4 4.4H6.4M4.4 2.4V6.4" stroke="#d4d4d4" stroke-width="0.95" fill="none"/></svg>
<span class="t" style="left:719.30px;top:579px;font-size:10.25px;color:#d4d4d4;letter-spacing:0.402px;">Ln 17, Col 1</span>
<span class="t" style="left:794.00px;top:579px;font-size:10.25px;color:#d4d4d4;letter-spacing:0.401px;">Spaces: 4</span>
<span class="t" style="left:857.00px;top:579px;font-size:10.25px;color:#d4d4d4;letter-spacing:0.711px;">UTF-8</span>
<span class="t" style="left:903.20px;top:579px;font-size:10.25px;color:#d4d4d4;letter-spacing:0.266px;">LF</span>
<span class="t" style="left:930.70px;top:579px;font-size:10.25px;color:#d4d4d4;letter-spacing:2.020px;">{}</span>
<span class="t" style="left:947.30px;top:579px;font-size:10.25px;color:#d4d4d4;letter-spacing:0.496px;">TypeScript</span>
<svg class="a" style="left:1016.00px;top:582.20px;" width="10.60" height="11.40" viewBox="0 0 10.6 11.4"><path d="M0.6 9.6C1.9 8.4 1.8 6.9 1.8 5.1C1.8 2.6 3.4 0.9 5.3 0.9S8.8 2.6 8.8 5.1C8.8 6.9 8.7 8.4 10 9.6Z" fill="none" stroke="#d4d4d4" stroke-width="0.95" stroke-linejoin="round"/><circle cx="8.3" cy="2.2" r="2.3" fill="#d4d4d4" stroke="#181818" stroke-width=".6"/></svg>
</div><div class="wm"><svg width="10" height="10.4" viewBox="0 0 10 10" style="vertical-align:-2px;margin-right:1.9px;filter:drop-shadow(0 0 .8px rgba(240,232,255,.7))"><rect x="0.5" y="0.5" width="9" height="9" rx="2" fill="rgba(110,100,170,.75)"/><path d="M3 2.2V7H7.8M2.2 3H7V7.8" fill="none" stroke="rgba(235,230,250,.95)" stroke-width="1"/></svg>Tuji.app</div><div class="frame"></div></body></html>
